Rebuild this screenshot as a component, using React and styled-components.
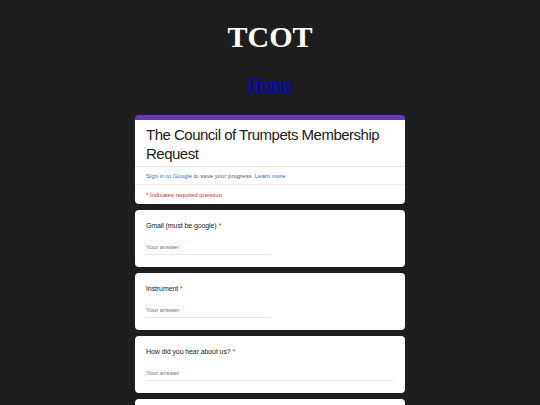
import React from "react";
import styled, { createGlobalStyle } from "styled-components";

const Global = createGlobalStyle`
  html, body { margin: 0; padding: 0; background: #1e1e1e; }
  body { font-family: "Liberation Serif", "Times New Roman", serif; overflow: hidden; }
`;

const Page = styled.div`
  display: flex;
  flex-direction: column;
  align-items: center;
  width: 540px;
  height: 405px;
  overflow: hidden;
`;

const Title = styled.h1`
  margin: 20px 0 0;
  font-family: "Liberation Serif", serif;
  font-weight: bold;
  font-size: 30px;
  line-height: 34px;
  color: #ffffff;
`;

const NavLink = styled.a`
  margin-top: 20px;
  font-family: "Liberation Serif", serif;
  font-size: 18px;
  line-height: 22px;
  color: #0000ee;
  text-decoration: underline;
`;

const Form = styled.div`
  margin-top: 19px;
  width: 270px;
  display: flex;
  flex-direction: column;
  gap: 6px;
  font-family: "Liberation Sans", Arial, sans-serif;
`;

const Card = styled.div`
  background: #ffffff;
  border-radius: 4px;
  overflow: hidden;
  ${(p) => p.$accent && `border-top: 5px solid #673ab7;`}
`;

const Header = styled.div`
  padding: 5px 11px 3px;
  font-size: 15px;
  letter-spacing: -0.5px;
  line-height: 19px;
  color: #202124;
  border-bottom: 1px solid #e6e6e6;
`;

const InfoRow = styled.div`
  padding: ${(p) => (p.$last ? "6px 11px 5px" : "5px 11px 4px")};
  font-size: 6px;
  line-height: 8px;
  color: #5f6368;
  border-bottom: ${(p) => (p.$last ? "none" : "1px solid #eeeeee")};
  ${(p) => p.$red && `color: #d93025;`}
`;

const Blue = styled.span`
  color: #1a73e8;
`;

const Question = styled.div`
  padding: 11px 11px 12px;
  display: flex;
  flex-direction: column;
`;

const Label = styled.div`
  font-size: 7px;
  letter-spacing: -0.1px;
  line-height: 10px;
  color: #202124;
`;

const Star = styled.span`
  color: #d93025;
`;

const Answer = styled.div`
  margin-top: 12px;
  width: ${(p) => (p.$full ? "100%" : "125px")};
  font-size: 6px;
  line-height: 8px;
  color: #70757a;
  padding-bottom: 3px;
  border-bottom: 1px solid #e6e6e6;
`;

const questions = [
  { label: "Gmail (must be google)", full: false },
  { label: "Instrument", full: false },
  { label: "How did you hear about us?", full: true },
];

export default function App() {
  return (
    <>
      <Global />
      <Page>
        <Title>TCOT</Title>
        <NavLink href="#">Home</NavLink>
        <Form>
          <Card $accent>
            <Header>The Council of Trumpets Membership Request</Header>
            <InfoRow>
              <Blue>Sign in to Google</Blue> to save your progress. <Blue>Learn more</Blue>
            </InfoRow>
            <InfoRow $red $last>* Indicates required question</InfoRow>
          </Card>
          {questions.map((q) => (
            <Card key={q.label}>
              <Question>
                <Label>
                  {q.label} <Star>*</Star>
                </Label>
                <Answer $full={q.full}>Your answer</Answer>
              </Question>
            </Card>
          ))}
          <Card>
            <Question>
              <Label>&nbsp;</Label>
            </Question>
          </Card>
        </Form>
      </Page>
    </>
  );
}
